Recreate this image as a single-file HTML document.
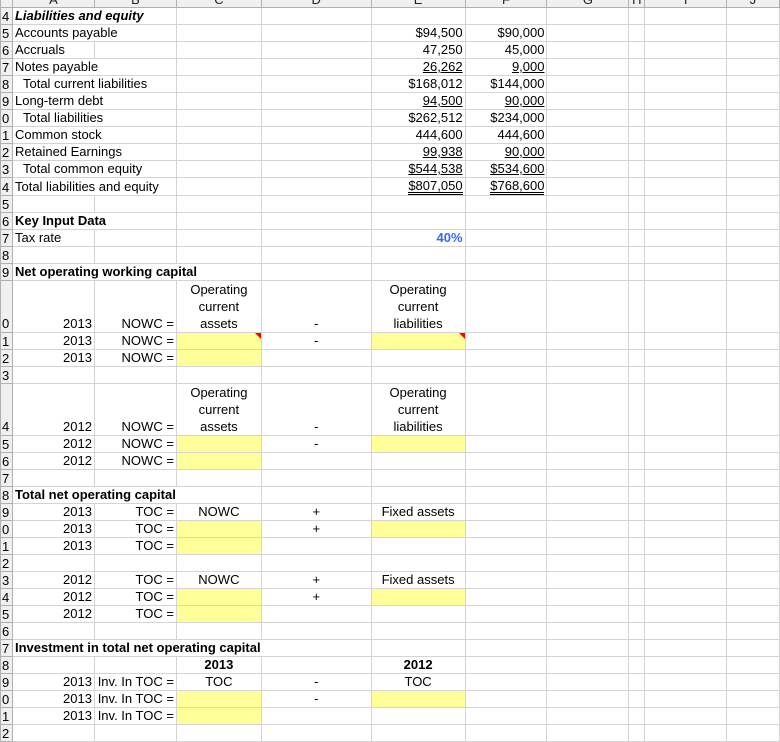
<!DOCTYPE html>
<html><head><meta charset="utf-8"><style>
body{margin:0;background:#fff;width:780px;height:741px;overflow:hidden;font-family:"Liberation Sans",Arial,sans-serif;font-size:13px;color:#000}
table{border-collapse:collapse;table-layout:fixed;position:absolute;left:0;top:-10px}
td{border:1px solid #d4d4d4;padding:0 2px;white-space:nowrap;overflow:visible;height:16px;line-height:16px;vertical-align:bottom;position:relative}
td.h{background:#f0f0f0;border-color:#b0b0b0;padding:0 1px;font-size:13px;line-height:15px;overflow:hidden}
tr.hd td{background:#f0f0f0;border-color:#b0b0b0;text-align:center;height:16px;line-height:14px;color:#222}
.r{text-align:right}.c{text-align:center}.b{font-weight:bold}.bi{font-weight:bold;font-style:italic}
.y{background:#ffff99}
.u{text-decoration:underline}
.du{border-bottom:3px double #000;line-height:13px;display:inline-block}
.tri::after{content:"";position:absolute;right:0;top:0;border-top:6px solid #f00;border-left:6px solid transparent}
tr.t td{height:50px;line-height:17px}
.blue{color:#3366ff;font-weight:bold}
</style></head><body>
<table>
<colgroup><col style="width:12px"><col style="width:82px"><col style="width:82px"><col style="width:85px"><col style="width:110px"><col style="width:94px"><col style="width:82px"><col style="width:82px"><col style="width:16px"><col style="width:82px"><col style="width:53px"></colgroup>
<tr class="hd"><td></td><td>A</td><td>B</td><td>C</td><td>D</td><td>E</td><td>F</td><td>G</td><td>H</td><td>I</td><td>J</td></tr>
<tr><td class="h">4</td><td colspan="2" class="bi">Liabilities and equity</td><td></td><td></td><td></td><td></td><td></td><td></td><td></td><td></td></tr>
<tr><td class="h">5</td><td colspan="2">Accounts payable</td><td></td><td></td><td class="r">$94,500</td><td class="r">$90,000</td><td></td><td></td><td></td><td></td></tr>
<tr><td class="h">6</td><td>Accruals</td><td></td><td></td><td></td><td class="r">47,250</td><td class="r">45,000</td><td></td><td></td><td></td><td></td></tr>
<tr><td class="h">7</td><td colspan="2">Notes payable</td><td></td><td></td><td class="r"><span class="u">26,262</span></td><td class="r"><span class="u">9,000</span></td><td></td><td></td><td></td><td></td></tr>
<tr><td class="h">8</td><td colspan="2"><span style="padding-left:8px">Total current liabilities</span></td><td></td><td></td><td class="r">$168,012</td><td class="r">$144,000</td><td></td><td></td><td></td><td></td></tr>
<tr><td class="h">9</td><td colspan="2">Long-term debt</td><td></td><td></td><td class="r"><span class="u">94,500</span></td><td class="r"><span class="u">90,000</span></td><td></td><td></td><td></td><td></td></tr>
<tr><td class="h">0</td><td colspan="2"><span style="padding-left:8px">Total liabilities</span></td><td></td><td></td><td class="r">$262,512</td><td class="r">$234,000</td><td></td><td></td><td></td><td></td></tr>
<tr><td class="h">1</td><td colspan="2">Common stock</td><td></td><td></td><td class="r">444,600</td><td class="r">444,600</td><td></td><td></td><td></td><td></td></tr>
<tr><td class="h">2</td><td colspan="2">Retained Earnings</td><td></td><td></td><td class="r"><span class="u">99,938</span></td><td class="r"><span class="u">90,000</span></td><td></td><td></td><td></td><td></td></tr>
<tr><td class="h">3</td><td colspan="2"><span style="padding-left:8px">Total common equity</span></td><td></td><td></td><td class="r"><span class="u">$544,538</span></td><td class="r"><span class="u">$534,600</span></td><td></td><td></td><td></td><td></td></tr>
<tr><td class="h">4</td><td colspan="2">Total liabilities and equity</td><td></td><td></td><td class="r" style="vertical-align:top"><span class="du">$807,050</span></td><td class="r" style="vertical-align:top"><span class="du">$768,600</span></td><td></td><td></td><td></td><td></td></tr>
<tr><td class="h">5</td><td></td><td></td><td></td><td></td><td></td><td></td><td></td><td></td><td></td><td></td></tr>
<tr><td class="h">6</td><td colspan="2" class="b">Key Input Data</td><td></td><td></td><td></td><td></td><td></td><td></td><td></td><td></td></tr>
<tr><td class="h">7</td><td>Tax rate</td><td></td><td></td><td></td><td class="r blue">40%</td><td></td><td></td><td></td><td></td><td></td></tr>
<tr><td class="h">8</td><td></td><td></td><td></td><td></td><td></td><td></td><td></td><td></td><td></td><td></td></tr>
<tr><td class="h">9</td><td colspan="3" class="b">Net operating working capital</td><td></td><td></td><td></td><td></td><td></td><td></td><td></td></tr>
<tr class="t"><td class="h">0</td><td class="r">2013</td><td class="r">NOWC =</td><td class="c">Operating<br>current<br>assets</td><td class="c">-</td><td class="c">Operating<br>current<br>liabilities</td><td></td><td></td><td></td><td></td><td></td></tr>
<tr><td class="h">1</td><td class="r">2013</td><td class="r">NOWC =</td><td class="y tri"></td><td class="c">-</td><td class="y tri"></td><td></td><td></td><td></td><td></td><td></td></tr>
<tr><td class="h">2</td><td class="r">2013</td><td class="r">NOWC =</td><td class="y"></td><td></td><td></td><td></td><td></td><td></td><td></td><td></td></tr>
<tr><td class="h">3</td><td></td><td></td><td></td><td></td><td></td><td></td><td></td><td></td><td></td><td></td></tr>
<tr class="t"><td class="h">4</td><td class="r">2012</td><td class="r">NOWC =</td><td class="c">Operating<br>current<br>assets</td><td class="c">-</td><td class="c">Operating<br>current<br>liabilities</td><td></td><td></td><td></td><td></td><td></td></tr>
<tr><td class="h">5</td><td class="r">2012</td><td class="r">NOWC =</td><td class="y"></td><td class="c">-</td><td class="y"></td><td></td><td></td><td></td><td></td><td></td></tr>
<tr><td class="h">6</td><td class="r">2012</td><td class="r">NOWC =</td><td class="y"></td><td></td><td></td><td></td><td></td><td></td><td></td><td></td></tr>
<tr><td class="h">7</td><td></td><td></td><td></td><td></td><td></td><td></td><td></td><td></td><td></td><td></td></tr>
<tr><td class="h">8</td><td colspan="3" class="b">Total net operating capital</td><td></td><td></td><td></td><td></td><td></td><td></td><td></td></tr>
<tr><td class="h">9</td><td class="r">2013</td><td class="r">TOC =</td><td class="c">NOWC</td><td class="c">+</td><td class="c">Fixed assets</td><td></td><td></td><td></td><td></td><td></td></tr>
<tr><td class="h">0</td><td class="r">2013</td><td class="r">TOC =</td><td class="y"></td><td class="c">+</td><td class="y"></td><td></td><td></td><td></td><td></td><td></td></tr>
<tr><td class="h">1</td><td class="r">2013</td><td class="r">TOC =</td><td class="y"></td><td></td><td></td><td></td><td></td><td></td><td></td><td></td></tr>
<tr><td class="h">2</td><td></td><td></td><td></td><td></td><td></td><td></td><td></td><td></td><td></td><td></td></tr>
<tr><td class="h">3</td><td class="r">2012</td><td class="r">TOC =</td><td class="c">NOWC</td><td class="c">+</td><td class="c">Fixed assets</td><td></td><td></td><td></td><td></td><td></td></tr>
<tr><td class="h">4</td><td class="r">2012</td><td class="r">TOC =</td><td class="y"></td><td class="c">+</td><td class="y"></td><td></td><td></td><td></td><td></td><td></td></tr>
<tr><td class="h">5</td><td class="r">2012</td><td class="r">TOC =</td><td class="y"></td><td></td><td></td><td></td><td></td><td></td><td></td><td></td></tr>
<tr><td class="h">6</td><td></td><td></td><td></td><td></td><td></td><td></td><td></td><td></td><td></td><td></td></tr>
<tr><td class="h">7</td><td colspan="4" class="b">Investment in total net operating capital</td><td></td><td></td><td></td><td></td><td></td><td></td></tr>
<tr><td class="h">8</td><td></td><td></td><td class="c b">2013</td><td></td><td class="c b">2012</td><td></td><td></td><td></td><td></td><td></td></tr>
<tr><td class="h">9</td><td class="r">2013</td><td class="r" style="padding:0 2px 0 0">Inv. In TOC =</td><td class="c">TOC</td><td class="c">-</td><td class="c">TOC</td><td></td><td></td><td></td><td></td><td></td></tr>
<tr><td class="h">0</td><td class="r">2013</td><td class="r" style="padding:0 2px 0 0">Inv. In TOC =</td><td class="y"></td><td class="c">-</td><td class="y"></td><td></td><td></td><td></td><td></td><td></td></tr>
<tr><td class="h">1</td><td class="r">2013</td><td class="r" style="padding:0 2px 0 0">Inv. In TOC =</td><td class="y"></td><td></td><td></td><td></td><td></td><td></td><td></td><td></td></tr>
<tr><td class="h">2</td><td></td><td></td><td></td><td></td><td></td><td></td><td></td><td></td><td></td><td></td></tr>
</table>
</body></html>
